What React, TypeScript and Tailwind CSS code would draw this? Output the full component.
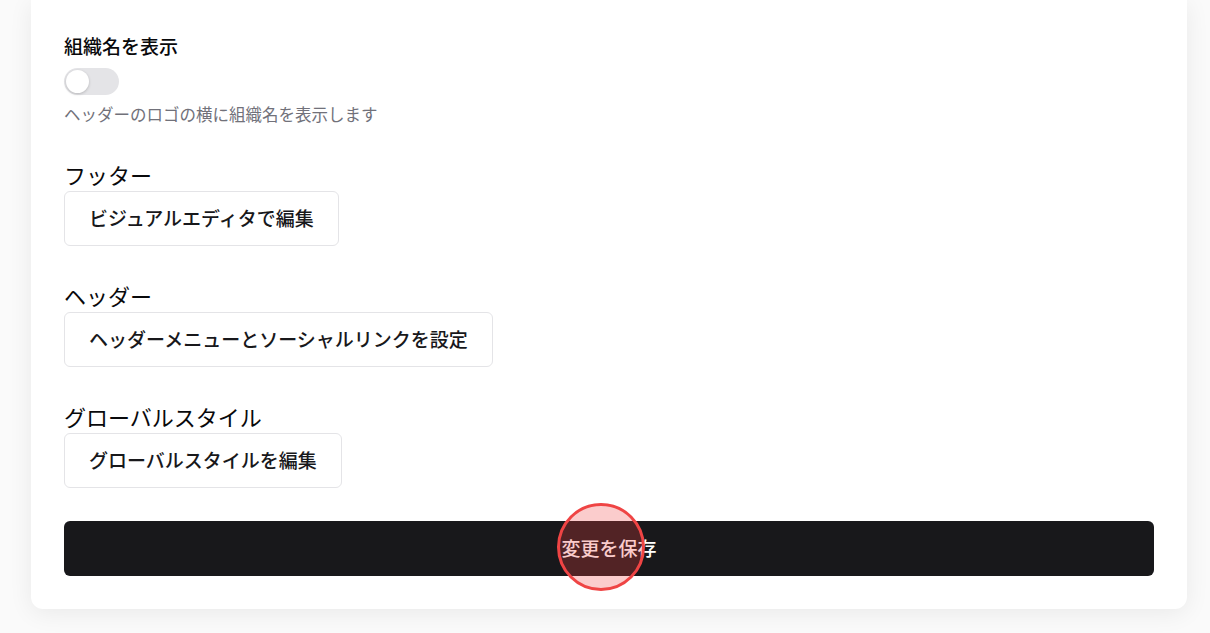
import { useState } from "react";

const sections = [
  { title: "フッター", action: "ビジュアルエディタで編集" },
  { title: "ヘッダー", action: "ヘッダーメニューとソーシャルリンクを設定" },
  { title: "グローバルスタイル", action: "グローバルスタイルを編集" },
];

export default function App() {
  const [showOrgName, setShowOrgName] = useState(false);

  return (
    <div className="min-h-screen bg-[#fafafa] font-['Noto_Sans_CJK_JP',sans-serif] text-[#09090b]">
      <div className="ml-[31px] w-[1156px] rounded-b-xl bg-white px-[33px] pt-[32px] pb-[33px] shadow-[0_4px_24px_rgba(0,0,0,0.07)]">
        {/* ── Organization name toggle ── */}
        <div className="flex flex-col items-start">
          <label className="text-[19px] font-medium leading-[28px]">組織名を表示</label>
          <button
            type="button"
            onClick={() => setShowOrgName(!showOrgName)}
            className={`mt-[8px] flex h-[27px] w-[55px] items-center rounded-full p-[2px] transition-colors ${
              showOrgName ? "bg-[#18181b]" : "bg-[#e4e4e7]"
            }`}
          >
            <span
              className={`h-[23px] w-[23px] rounded-full bg-white shadow-[0_1px_3px_rgba(0,0,0,0.2)] transition-transform ${
                showOrgName ? "translate-x-[28px]" : "translate-x-0"
              }`}
            />
          </button>
          <p className="mt-[7px] text-[16.5px] leading-[24px] text-[#71717a]">ヘッダーのロゴの横に組織名を表示します</p>
        </div>

        {/* ── Editor links ── */}
        {sections.map((s, i) => (
          <div key={s.title} className={`flex flex-col items-start ${i === 0 ? "mt-[33px]" : "mt-[34px]"}`}>
            <h3 className="text-[22px] leading-[30px]">{s.title}</h3>
            <button
              type="button"
              className="mt-[2px] flex h-[55px] items-center rounded-md border border-[#e4e4e7] bg-white px-6 text-[19px] font-medium text-[#18181b]"
            >
              {s.action}
            </button>
          </div>
        ))}

        {/* ── Save ── */}
        <div className="relative mt-[33px]">
          <button
            type="button"
            className="flex h-[55px] w-full items-center justify-center rounded-md bg-[#18181b] text-[19px] font-medium text-white"
          >
            変更を保存
          </button>
          {/* click indicator */}
          <span className="pointer-events-none absolute left-[493px] top-[-18px] h-[88px] w-[88px] rounded-full border-[3px] border-[#ef4444] bg-[rgba(239,68,68,0.27)]" />
        </div>
      </div>
    </div>
  );
}
